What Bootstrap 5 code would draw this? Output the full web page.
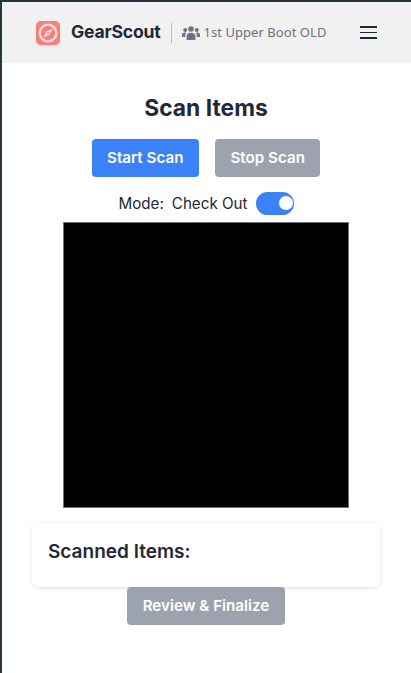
<!DOCTYPE html>
<html lang="en">
<head>
<meta charset="utf-8">
<title>GearScout</title>
<link href="https://cdn.jsdelivr.net/npm/bootstrap@5.3.0/dist/css/bootstrap.min.css" rel="stylesheet">
<style>
html, body { height: 100%; }
body { font-family: Inter, sans-serif; color: #1f2937; background: #fff; border-top: 2px solid #263640; border-left: 2px solid #263640; overflow: hidden; }
.gs-bar { height: 61px; background: #f1f1f1; padding: 0 34px 0 34px; }
.gs-logo { width: 24px; height: 24px; border-radius: 5px; background: #f87f7c; box-shadow: 0 1px 2px rgba(0,0,0,.12); }
.gs-brand { font-size: 17.6px; font-weight: 700; color: #1f2937; margin-left: 11px; letter-spacing: -.2px; }
.gs-sep { width: 1px; height: 20px; background: #b9bcc2; margin: 0 10px 0 10px; }
.gs-unit { font-family: "Noto Sans", sans-serif; font-size: 13px; color: #6b7280; margin-left: 4px; letter-spacing: .05px; }
.gs-burger { width: 17.3px; }
.gs-burger i { display: block; height: 1.5px; background: #1f2937; margin-bottom: 3.8px; }
.gs-burger i:last-child { margin-bottom: 0; }
.gs-main { padding-right: 1px; }
.gs-title { font-size: 22.8px; font-weight: 700; line-height: 32px; margin: 29px 0 15px; }
.gs-btn { height: 38px; border: 0; border-radius: 4px; color: #fff; font-size: 15.2px; font-weight: 600; padding: 0 15.5px; }
.gs-btn:hover, .gs-btn:active, .gs-btn:disabled { color: #fff; }
.gs-blue { background: #3b82f6; }
.gs-blue:hover { background: #3b82f6; }
.gs-gray, .gs-gray:hover, .gs-gray:disabled { background: #9ca3af; opacity: 1; }
.gs-mode { font-size: 15.2px; height: 26px; margin-top: 13px; margin-bottom: 6px; gap: 8px; }
.gs-modetext { padding-top: 2px; }
.gs-switch { width: 38px; height: 23px; border-radius: 12px; background: #3b82f6; position: relative; }
.gs-knob { position: absolute; top: 4.5px; right: 1px; width: 14px; height: 14px; border-radius: 50%; background: #fff; }
.gs-video { width: 286px; height: 286px; background: #000; border: 1px solid #6b7280; }
.gs-card { width: 348px; height: 64px; background: #fff; border-radius: 6px; box-shadow: 0 1px 4px rgba(0,0,0,.13); margin-top: 15px; padding: 15px 16px; }
.gs-card h2 { font-size: 19px; font-weight: 600; line-height: 28px; margin: 0; color: #1f2937; }
</style>
</head>
<body>
<nav class="gs-bar d-flex align-items-center">
  <div class="gs-logo d-flex align-items-center justify-content-center flex-shrink-0">
    <svg width="20" height="20" viewBox="0 0 20 20" fill="none" aria-hidden="true">
      <circle cx="10" cy="10" r="8.3" stroke="#fde3e0" stroke-width="2.3"/>
      <path d="M14.6 5.4 L11.6 11.6 L5.4 14.6 L8.4 8.4 Z" fill="#fde3e0"/>
      <circle cx="10" cy="10" r="1" fill="#f87f7c"/>
    </svg>
  </div>
  <span class="gs-brand">GearScout</span>
  <span class="gs-sep"></span>
  <svg width="18" height="14" viewBox="0 0 18 14" fill="#6b7280" aria-hidden="true">
    <circle cx="9" cy="3" r="2.8"/>
    <circle cx="3.2" cy="4" r="2"/>
    <circle cx="14.8" cy="4" r="2"/>
    <path d="M4.6 14 V10.4 C4.6 8 6.4 6.8 9 6.8 C11.6 6.8 13.4 8 13.4 10.4 V14 Z"/>
    <path d="M0 11 V8.8 C0 7.4 1.1 6.6 2.7 6.6 C3.2 6.6 3.7 6.7 4.1 6.9 C3.5 7.7 3.3 8.6 3.3 9.6 V11 Z"/>
    <path d="M18 11 V8.8 C18 7.4 16.9 6.6 15.3 6.6 C14.8 6.6 14.3 6.7 13.9 6.9 C14.5 7.7 14.7 8.6 14.7 9.6 V11 Z"/>
  </svg>
  <span class="gs-unit">1st Upper Boot OLD</span>
  <div class="gs-burger ms-auto"><i></i><i></i><i></i></div>
</nav>
<main class="gs-main d-flex flex-column align-items-center">
  <h1 class="gs-title">Scan Items</h1>
  <div class="d-flex gap-3">
    <button type="button" class="btn gs-btn gs-blue">Start Scan</button>
    <button type="button" class="btn gs-btn gs-gray" disabled>Stop Scan</button>
  </div>
  <div class="gs-mode d-flex align-items-center">
    <span class="gs-modetext">Mode:</span>
    <span class="gs-modetext">Check Out</span>
    <span class="gs-switch"><span class="gs-knob"></span></span>
  </div>
  <div class="gs-video"></div>
  <section class="gs-card"><h2>Scanned Items:</h2></section>
  <button type="button" class="btn gs-btn gs-gray" disabled>Review &amp; Finalize</button>
</main>
<script src="https://cdn.jsdelivr.net/npm/bootstrap@5.3.0/dist/js/bootstrap.bundle.min.js"></script>
</body>
</html>
